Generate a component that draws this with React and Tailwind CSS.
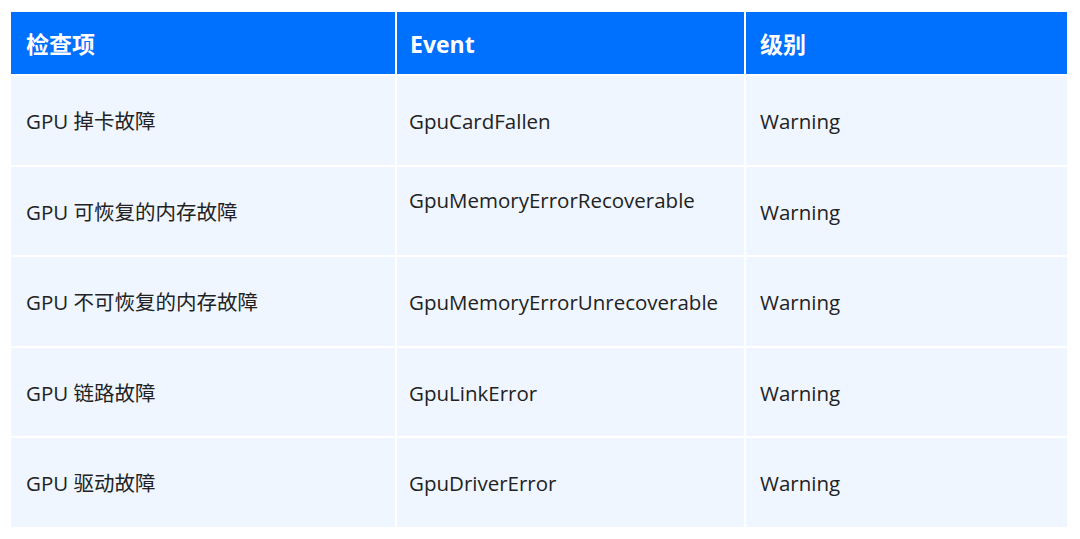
import React from "react";

const rows = [
  ["GPU 掉卡故障", "GpuCardFallen", "Warning", false],
  ["GPU 可恢复的内存故障", "GpuMemoryErrorRecoverable", "Warning", true],
  ["GPU 不可恢复的内存故障", "GpuMemoryErrorUnrecoverable", "Warning", false],
  ["GPU 链路故障", "GpuLinkError", "Warning", false],
  ["GPU 驱动故障", "GpuDriverError", "Warning", false],
];

const font = { fontFamily: '"Open Sans", "Noto Sans CJK SC", sans-serif' };

export default function App() {
  return (
    <div className="w-[1080px] h-[539px] bg-white pt-[12px] pl-[11px]" style={font}>
      <div className="grid w-[1056px] grid-cols-[384px_347px_321px] gap-[2px]">
        <div className="h-[62px] bg-[#0070ff] flex items-center pl-[15px] pt-[3px] text-white text-[23px] font-bold">检查项</div>
        <div className="h-[62px] bg-[#0070ff] flex items-center pl-[13px] pt-[3px] text-white text-[23px] font-bold">Event</div>
        <div className="h-[62px] bg-[#0070ff] flex items-center pl-[14px] pt-[3px] text-white text-[23px] font-bold">级别</div>
        {rows.map(([a, b, c, up]) => (
          <React.Fragment key={b}>
            <div className="h-[88.6px] bg-[#eff6ff] flex items-center pl-[15px] pt-[2px] text-[20.5px] text-[#222222]">{a}</div>
            <div className={"h-[88.6px] bg-[#eff6ff] flex items-center pl-[12px] text-[20.5px] text-[#222222] " + (up ? "pb-[22px]" : "pt-[2px]")}>{b}</div>
            <div className="h-[88.6px] bg-[#eff6ff] flex items-center pl-[14px] pt-[2px] text-[20.5px] text-[#222222]">{c}</div>
          </React.Fragment>
        ))}
      </div>
    </div>
  );
}
